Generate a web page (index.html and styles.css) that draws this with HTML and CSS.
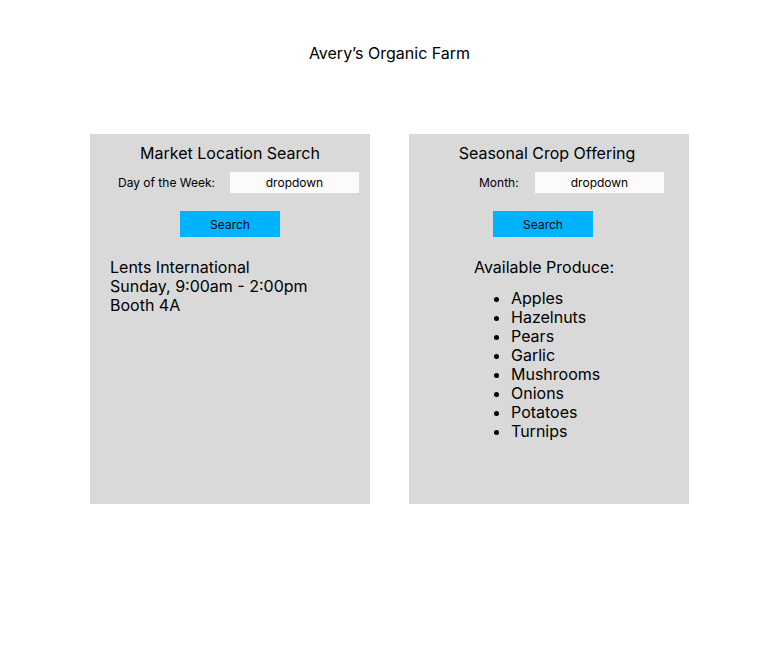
FILE: index.html
```html
<!DOCTYPE html>
<html>
<head>
<meta charset="utf-8">
<link rel="stylesheet" href="styles.css">
</head>
<body>
<h1 class="page-title">Avery’s Organic Farm</h1>
<main class="panels">
  <section class="panel">
    <h2 class="panel-title">Market Location Search</h2>
    <div class="field field-day">
      <span class="field-label">Day of the Week:</span>
      <div class="dropdown">dropdown</div>
    </div>
    <button class="search-btn search-btn-left">Search</button>
    <div class="result">
      <p>Lents International</p>
      <p>Sunday, 9:00am - 2:00pm</p>
      <p>Booth 4A</p>
    </div>
  </section>
  <section class="panel">
    <h2 class="panel-title panel-title-right">Seasonal Crop Offering</h2>
    <div class="field field-month">
      <span class="field-label">Month:</span>
      <div class="dropdown">dropdown</div>
    </div>
    <button class="search-btn search-btn-right">Search</button>
    <div class="produce">
      <p class="produce-title">Available Produce:</p>
      <ul class="produce-list">
        <li>Apples</li>
        <li>Hazelnuts</li>
        <li>Pears</li>
        <li>Garlic</li>
        <li>Mushrooms</li>
        <li>Onions</li>
        <li>Potatoes</li>
        <li>Turnips</li>
      </ul>
    </div>
  </section>
</main>
</body>
</html>
```

FILE: styles.css
```css
* { box-sizing: border-box; }
body {
  margin: 0;
  font-family: Inter, "Noto Sans", sans-serif;
  color: #000;
  background: #fff;
}
.page-title {
  margin: 0;
  padding-top: 44px;
  font-size: 16px;
  line-height: 19px;
  font-weight: 400;
  text-align: center;
}
.panels {
  display: flex;
  justify-content: center;
  gap: 39px;
  margin-top: 71px;
}
.panel {
  width: 280px;
  height: 370px;
  background: #d9d9d9;
  padding-top: 10px;
}
.panel-title {
  margin: 0;
  font-size: 16px;
  line-height: 19px;
  font-weight: 400;
  text-align: center;
}
.panel-title-right { padding-right: 4px; }
.field {
  display: flex;
  align-items: center;
  margin-top: 9px;
  font-size: 12px;
}
.field-day { padding-left: 28px; }
.field-day .field-label { width: 112px; }
.field-month { padding-left: 70px; }
.field-month .field-label { width: 56px; }
.dropdown {
  width: 129px;
  height: 21px;
  background: #fdfafa;
  text-align: center;
  line-height: 21px;
}
.search-btn {
  display: block;
  width: 100px;
  height: 26px;
  margin-top: 18px;
  border: 0;
  padding: 0;
  background: #00b2ff;
  font-family: inherit;
  font-size: 12px;
  color: #000;
}
.search-btn-left { margin-left: 90px; }
.search-btn-right { margin-left: 84px; }
.result {
  margin-top: 21px;
  padding-left: 20px;
  font-size: 16px;
  line-height: 19px;
}
.result p { margin: 0; }
.produce {
  margin-top: 21px;
  padding-left: 65px;
  font-size: 16px;
  line-height: 19px;
}
.produce-title { margin: 0; }
.produce-list {
  margin: 12px 0 0;
  padding-left: 37px;
}
```
